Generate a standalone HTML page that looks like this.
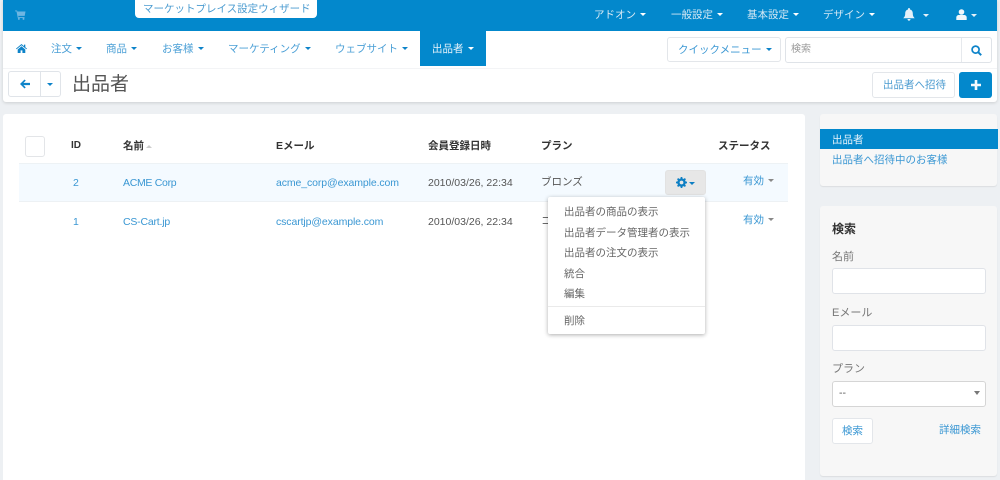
<!DOCTYPE html>
<html lang="ja" style="background:#edf0f3"><head><meta charset="utf-8"><title>出品者</title>
<style>
html,body{margin:0;padding:0}
body{width:1000px;height:480px;overflow:hidden;position:relative;background:#edf0f3;font-family:"Liberation Sans","Noto Sans CJK JP",sans-serif;font-size:10.5px;color:#444;filter:blur(.3px)}
.a{position:absolute;white-space:nowrap;line-height:14px}
.b{position:absolute;box-sizing:border-box}
.l{color:#3a97d3}
.w{color:#d5e8f4}
.n{color:#4a9fd6}
.c{display:inline-block;width:0;height:0;border-left:3.500px solid transparent;border-right:3.500px solid transparent;border-top:3.500px solid currentColor;vertical-align:2px;margin-left:4px}
.h{font-weight:bold;color:#333}
svg{position:absolute;display:block}
.d{color:#666;font-size:10.5px}
.lab{color:#777;font-size:11px}
.in{position:absolute;left:832px;width:154px;height:26px;background:#fff;border:1px solid #e0e3e8;border-radius:3px;box-sizing:border-box}
</style></head><body>
<!-- top header -->
<div class="b" style="left:3px;top:0;width:994px;height:102px;background:#fff;box-shadow:0 1px 3px rgba(0,0,0,.14);border-radius:0 0 3px 3px"></div>
<div class="b" style="left:3px;top:0;width:994px;height:31px;background:#0388cc"></div>
<svg style="left:15px;top:10px" width="11" height="10" viewBox="0 0 12 11"><path d="M0 0.5h2.200l.4 1.200H11.500L10.600 6.500H3.500l.3 1.200h6.600v1H3L1.600 1.500H0z" fill="#6fb6e2"/><circle cx="4.200" cy="9.800" r="1.100" fill="#6fb6e2"/><circle cx="9.300" cy="9.800" r="1.100" fill="#6fb6e2"/></svg>
<div class="b" style="left:135px;top:0;width:182px;height:18px;background:#fff;border-radius:0 0 4px 4px"></div>
<div class="a" style="left:143px;top:2px;color:#4a9bd0">マーケットプレイス設定ウィザード</div>
<div class="a w" style="left:594px;top:8px">アドオン<i class="c" style="color:#fff"></i></div>
<div class="a w" style="left:671px;top:8px">一般設定<i class="c" style="color:#fff"></i></div>
<div class="a w" style="left:747px;top:8px">基本設定<i class="c" style="color:#fff"></i></div>
<div class="a w" style="left:823px;top:8px">デザイン<i class="c" style="color:#fff"></i></div>
<svg style="left:903px;top:8px" width="12" height="13" viewBox="0 0 12 13"><path d="M6 0c.6 0 1 .4 1 1v.5C9 2 9.800 3.500 9.800 5.500c0 2.500.8 3.500 1.900 4.700H.3C1.400 9 2.200 8 2.200 5.500 2.200 3.500 3 2 5 1.500V1c0-.6.400-1 1-1zM4.500 11h3C7.500 12 6.800 12.700 6 12.700S4.500 12 4.500 11z" fill="#e4f1f9"/></svg>
<i class="c" style="position:absolute;left:923px;top:14px;margin:0;color:#e4f1f9"></i>
<svg style="left:956px;top:9px" width="11" height="11" viewBox="0 0 11 11"><circle cx="5.500" cy="3" r="2.800" fill="#f0f7fb"/><path d="M0.300 11V8.500C.3 7 1.500 6 3 6h5c1.500 0 2.700 1 2.700 2.500V11z" fill="#f0f7fb"/></svg>
<i class="c" style="position:absolute;left:971px;top:14px;margin:0;color:#e4f1f9"></i>
<!-- nav -->
<svg style="left:16px;top:44px" width="11" height="9" viewBox="0 0 11 9"><path d="M5.500 0L0 4.600l.6.700L5.500 1.200l4.900 4.100.6-.7L9.300 3.200V.6H8v1.500z" fill="#0d83c9"/><path d="M1.700 5.500L5.500 2.300l3.800 3.200V9H6.400V6.400H4.600V9H1.700z" fill="#0d83c9"/></svg>
<div class="a n" style="left:51px;top:42px">注文<i class="c" style="color:#0d83c9"></i></div>
<div class="a n" style="left:106px;top:42px">商品<i class="c" style="color:#0d83c9"></i></div>
<div class="a n" style="left:162px;top:42px">お客様<i class="c" style="color:#0d83c9"></i></div>
<div class="a n" style="left:228px;top:42px">マーケティング<i class="c" style="color:#0d83c9"></i></div>
<div class="a n" style="left:335px;top:42px">ウェブサイト<i class="c" style="color:#0d83c9"></i></div>
<div class="b" style="left:420px;top:31px;width:66px;height:35px;background:#0388cc"></div>
<div class="a" style="left:432px;top:42px;color:#e8f3fa">出品者<i class="c" style="color:#fff"></i></div>
<div class="b" style="left:667px;top:37px;width:114px;height:25px;background:#fff;border:1px solid #e3e6ea;border-radius:3px"></div>
<div class="a" style="left:678px;top:43px;color:#3a97d3">クイックメニュー<i class="c" style="color:#0d83c9"></i></div>
<div class="b" style="left:785px;top:37px;width:207px;height:26px;background:#fff;border:1px solid #dfe3e8;border-radius:3px"></div>
<div class="b" style="left:961px;top:38px;width:1px;height:24px;background:#e6e9ed"></div>
<div class="a" style="left:791px;top:43px;color:#999;font-size:10px">検索</div>
<svg style="left:971px;top:45px" width="11" height="11" viewBox="0 0 11 11"><circle cx="4.600" cy="4.600" r="3.500" fill="none" stroke="#0d83c9" stroke-width="1.700"/><path d="M7.200 7.200l3 3" stroke="#0d83c9" stroke-width="2"/></svg>
<div class="b" style="left:3px;top:68px;width:994px;height:1px;background:#f3f4f6"></div>
<!-- toolbar -->
<div class="b" style="left:8px;top:71px;width:53px;height:26px;background:#fff;border:1px solid #e0e4e9;border-radius:3px"></div>
<div class="b" style="left:40px;top:72px;width:1px;height:24px;background:#e0e4e9"></div>
<svg style="left:20px;top:79px" width="10" height="10" viewBox="0 0 11 10"><path d="M5 0l1.300 1.300L3.800 3.700H11v2.600H3.800l2.500 2.400L5 10 0 5z" fill="#0d83c9"/></svg>
<i class="c" style="position:absolute;left:47px;top:83px;margin:0;color:#0d83c9"></i>
<div class="a" style="left:72px;top:73px;font-size:19px;line-height:24px;color:#555">出品者</div>
<div class="b" style="left:872px;top:72px;width:83px;height:26px;background:#fff;border:1px solid #e3e6ea;border-radius:3px"></div>
<div class="a" style="left:883px;top:78px;color:#4a9bd0">出品者へ招待</div>
<div class="b" style="left:959px;top:72px;width:33px;height:26px;background:#0388cc;border-radius:3px"></div>
<svg style="left:971px;top:80px" width="10" height="10" viewBox="0 0 10 10"><path d="M3.700 0h2.600v3.700H10v2.600H6.300V10H3.700V6.300H0V3.700h3.700z" fill="#f2f9fd"/></svg>
<!-- main panel -->
<div class="b" style="left:3px;top:114px;width:802px;height:366px;background:#fff;border-radius:3px 3px 0 0"></div>
<div class="b" style="left:25px;top:136px;width:20px;height:21px;background:#fff;border:1px solid #e3e5e8;border-radius:3px"></div>
<div class="a h" style="left:71px;top:139px;font-size:10px">ID</div>
<div class="a h" style="left:123px;top:139px">名前</div>
<i style="position:absolute;left:146px;top:145px;width:0;height:0;border-left:3.500px solid transparent;border-right:3.500px solid transparent;border-bottom:3.500px solid #ccc"></i>
<div class="a h" style="left:276px;top:139px">Eメール</div>
<div class="a h" style="left:428px;top:139px">会員登録日時</div>
<div class="a h" style="left:541px;top:139px">プラン</div>
<div class="a h" style="left:718px;top:139px">ステータス</div>
<div class="b" style="left:19px;top:163px;width:769px;height:39px;background:#f4faff;border-top:1px solid #edf2f5;border-bottom:1px solid #edf1f4"></div>
<div class="a l" style="left:73px;top:176px">2</div>
<div class="a l" style="left:123px;top:176px;letter-spacing:-.3px">ACME Corp</div>
<div class="a l" style="left:276px;top:176px;letter-spacing:-.1px">acme_corp@example.com</div>
<div class="a" style="left:428px;top:176px;color:#555">2010/03/26, 22:34</div>
<div class="a" style="left:541px;top:175px;color:#555">ブロンズ</div>
<div class="b" style="left:665px;top:170px;width:41px;height:25px;background:#e7e7e7;border:1px solid #e2e2e2;border-radius:3px"></div>
<svg style="left:676px;top:177px" width="11" height="11" viewBox="0 0 11 11"><circle cx="5.500" cy="5.500" r="3.100" fill="none" stroke="#0d7fc4" stroke-width="2.400"/><path d="M5.500 0v2M5.500 9v2M0 5.500h2M9 5.500h2M1.600 1.600L3 3M8 8l1.400 1.400M9.400 1.600L8 3M3 8L1.600 9.400" stroke="#0d7fc4" stroke-width="1.700"/></svg>
<i class="c" style="position:absolute;left:689px;top:182px;margin:0;color:#0d7fc4"></i>
<div class="a l" style="left:743px;top:174px">有効<i class="c" style="color:#888"></i></div>
<div class="a l" style="left:73px;top:215px">1</div>
<div class="a l" style="left:123px;top:215px;letter-spacing:-.2px">CS-Cart.jp</div>
<div class="a l" style="left:276px;top:215px;letter-spacing:-.1px">cscartjp@example.com</div>
<div class="a" style="left:428px;top:215px;color:#555">2010/03/26, 22:34</div>
<div class="a" style="left:541px;top:214px;color:#555">コ</div>
<div class="a l" style="left:743px;top:213px">有効<i class="c" style="color:#888"></i></div>
<!-- dropdown -->
<div class="b" style="left:548px;top:197px;width:157px;height:137px;background:#fff;border-radius:2px;box-shadow:0 1px 4px rgba(0,0,0,.32)"></div>
<div class="a d" style="left:564px;top:205px">出品者の商品の表示</div>
<div class="a d" style="left:564px;top:226px">出品者データ管理者の表示</div>
<div class="a d" style="left:564px;top:246px">出品者の注文の表示</div>
<div class="a d" style="left:564px;top:267px">統合</div>
<div class="a d" style="left:564px;top:287px">編集</div>
<div class="b" style="left:548px;top:306px;width:157px;height:1px;background:#eaeaea"></div>
<div class="a d" style="left:564px;top:314px">削除</div>
<!-- sidebar 1 -->
<div class="b" style="left:820px;top:114px;width:177px;height:72px;background:#f7f7f7;border-radius:3px;box-shadow:0 1px 1px rgba(0,0,0,.08)"></div>
<div class="b" style="left:820px;top:129px;width:178px;height:20px;background:#0388cc"></div>
<div class="a" style="left:832px;top:133px;color:#e8f3fa">出品者</div>
<div class="a l" style="left:832px;top:153px">出品者へ招待中のお客様</div>
<!-- sidebar 2 -->
<div class="b" style="left:820px;top:206px;width:177px;height:270px;background:#f7f7f7;border-radius:3px;box-shadow:0 1px 1px rgba(0,0,0,.08)"></div>
<div class="a" style="left:832px;top:222px;font-size:12px;font-weight:bold;color:#333">検索</div>
<div class="a lab" style="left:832px;top:250px">名前</div>
<div class="in" style="top:268px"></div>
<div class="a lab" style="left:832px;top:306px">Eメール</div>
<div class="in" style="top:325px"></div>
<div class="a lab" style="left:832px;top:362px">プラン</div>
<div class="in" style="top:381px;border-color:#d5d5d5"></div>
<div class="a" style="left:839px;top:386px;color:#555">--</div>
<i style="position:absolute;left:974px;top:391px;width:0;height:0;border-left:3.500px solid transparent;border-right:3.500px solid transparent;border-top:4px solid #777"></i>
<div class="b" style="left:832px;top:418px;width:41px;height:26px;background:#fff;border:1px solid #e3e6ea;border-radius:3px"></div>
<div class="a l" style="left:842px;top:424px">検索</div>
<div class="a l" style="left:939px;top:423px">詳細検索</div>
</body></html>
